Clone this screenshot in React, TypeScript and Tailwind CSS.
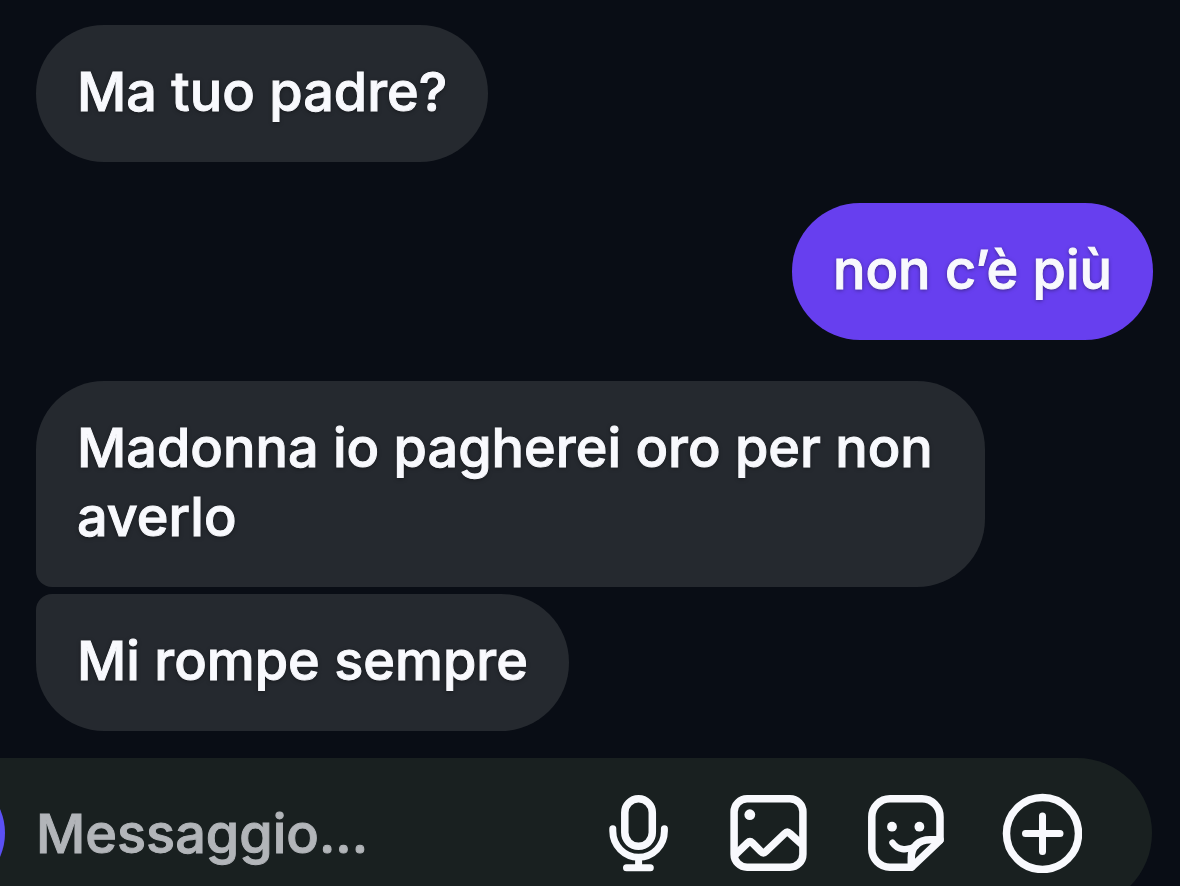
import { useState } from 'react'
import clsx from 'clsx'

type Tmessage = {
  id: number
  text: string
  mine: boolean
  shape: string
}

const MESSAGES: Tmessage[] = [
  { id: 1, text: 'Ma tuo padre?', mine: false, shape: 'rounded-[68px]' },
  { id: 2, text: 'non c’è più', mine: true, shape: 'mt-[41px] rounded-[68px]' },
  { id: 3, text: 'Madonna io pagherei oro per non averlo', mine: false, shape: 'mt-[41px] rounded-[68px] rounded-bl-[16px]' },
  { id: 4, text: 'Mi rompe sempre', mine: false, shape: 'mt-[7px] rounded-[68px] rounded-tl-[16px]' },
]

const iconProps = {
  height: 80,
  fill: 'none',
  stroke: 'currentColor',
  strokeWidth: 7.5,
  strokeLinecap: 'round',
  strokeLinejoin: 'round',
  'aria-hidden': true,
} as const

const MicIcon = () => (
  <svg width="72" viewBox="0 0 72 80" {...iconProps}>
    <rect x="22.8" y="5.8" width="27.5" height="47.5" rx="13.7" />
    <path d="M10.8 35.8v2.3a25.8 26.2 0 0 0 51.6 0v-2.3M36.6 65v9.8M24.5 74.8h23.8" strokeWidth="7" />
  </svg>
)

const ImageIcon = () => (
  <svg width="80" viewBox="0 0 80 80" {...iconProps}>
    <rect x="4.1" y="5.8" width="68.8" height="68.4" rx="13" />
    <path d="M5.5 61.5 17.5 50q2.5-2.4 5 0l8.3 8.4q2.6 2.6 5.2 0L54.6 40.6q2.7-2.6 5.4 0L72 51.5" />
    <circle cx="19.8" cy="21.7" r="5.4" fill="currentColor" stroke="none" />
  </svg>
)

const StickerIcon = () => (
  <svg width="80" viewBox="0 0 80 80" {...iconProps}>
    <path d="M45.5 74.2H24A18.2 18.2 0 0 1 5.8 56V24A18.2 18.2 0 0 1 24 5.8h32A18 18 0 0 1 74 24v23.3z" />
    <path d="M74 46.8H64C52.5 46.8 45.3 54 45.3 64.5V74" />
    <path d="M26.5 49.8C31 56.5 40 58.5 50 53" strokeWidth="6.5" />
    <circle cx="26" cy="33.7" r="4.9" fill="currentColor" stroke="none" />
    <circle cx="53.4" cy="33.7" r="4.9" fill="currentColor" stroke="none" />
  </svg>
)

const PlusIcon = () => (
  <svg width="80" viewBox="0 0 80 80" {...iconProps}>
    <circle cx="40.5" cy="40.5" r="36" />
    <path d="M40.5 23v35.5M23.5 40.5H58" strokeWidth="7" />
  </svg>
)

const ACTIONS = [
  { label: 'Messaggio vocale', icon: <MicIcon /> },
  { label: 'Galleria', icon: <ImageIcon /> },
  { label: 'Adesivi', icon: <StickerIcon /> },
  { label: 'Altro', icon: <PlusIcon /> },
]

const App = () => {
  const [draft, setDraft] = useState('')

  return (
    <main className="flex h-screen flex-col overflow-hidden bg-[#090d15] font-[Inter,sans-serif] text-[54px] leading-[69px] font-medium text-[#f8f9fd] [-webkit-text-stroke:1px] [text-shadow:0_1px_4px_rgba(0,0,0,0.5)]">
      {/* messages */}
      <div className="flex shrink-0 flex-col pt-[25px] pr-[27px] pl-9">
        {MESSAGES.map(message => (
          <p
            key={message.id}
            className={clsx(
              'max-w-[85%] px-[41px] pt-8 pb-9',
              message.mine ? 'self-end bg-[#673fef]' : 'self-start bg-[#25292f]',
              message.shape,
            )}
          >
            {message.text}
          </p>
        ))}
      </div>
      {/* composer */}
      <div className="relative mt-[27px] mr-7 flex h-[150px] shrink-0 items-center rounded-r-full bg-[#192020] pr-[70px] pl-9">
        <span className="absolute top-[15px] -left-[115px] size-[120px] rounded-full bg-[#5b50f5]" />
        <input
          aria-label="Messaggio"
          placeholder="Messaggio..."
          value={draft}
          onChange={e => setDraft(e.target.value)}
          className="min-w-0 flex-1 bg-transparent outline-none placeholder:text-[#b2b5b9]"
        />
        <div className="flex shrink-0 gap-14">
          {ACTIONS.map(action => (
            <button key={action.label} type="button" aria-label={action.label}>
              {action.icon}
            </button>
          ))}
        </div>
      </div>
    </main>
  )
}

export default App
